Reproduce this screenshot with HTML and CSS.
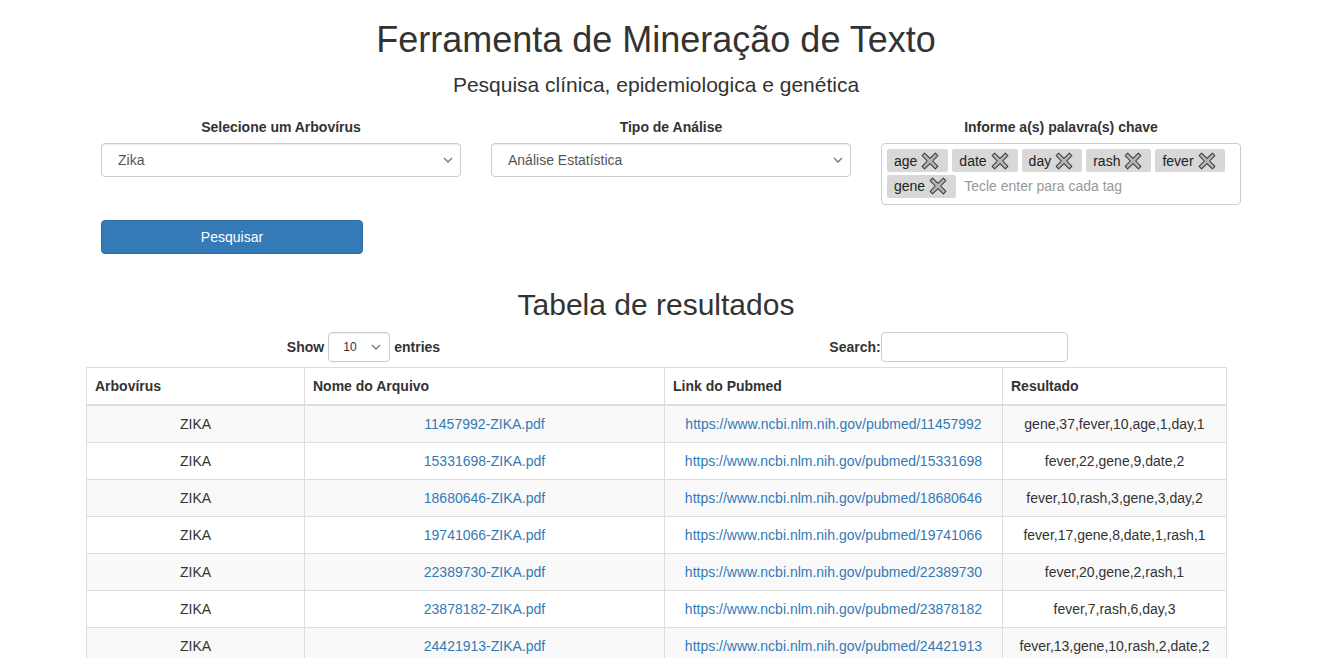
FILE: index.html
```html
<!DOCTYPE html>
<html lang="pt">
<head>
<meta charset="utf-8">
<title>Ferramenta de Mineração de Texto</title>
<link rel="stylesheet" href="styles.css">
</head>
<body>
<div class="page">
  <header class="head">
    <h1 class="title">Ferramenta de Mineração de Texto</h1>
    <p class="subtitle">Pesquisa clínica, epidemiologica e genética</p>
  </header>

  <div class="form-row">
    <div class="field">
      <label class="field-label">Selecione um Arbovírus</label>
      <div class="select">
        <span>Zika</span>
        <svg class="chev" width="10" height="6" viewBox="0 0 10 6"><path d="M1 1 L5 5 L9 1" fill="none" stroke="#777" stroke-width="1.3"/></svg>
      </div>
    </div>
    <div class="field">
      <label class="field-label">Tipo de Análise</label>
      <div class="select">
        <span>Análise Estatística</span>
        <svg class="chev" width="10" height="6" viewBox="0 0 10 6"><path d="M1 1 L5 5 L9 1" fill="none" stroke="#777" stroke-width="1.3"/></svg>
      </div>
    </div>
    <div class="field">
      <label class="field-label">Informe a(s) palavra(s) chave</label>
      <div class="tags">
        <span class="tag">age<svg class="x" width="18" height="18" viewBox="0 0 16 16"><polygon points="3.2,1 8,5.6 12.8,1 15,3.2 10.4,8 15,12.8 12.8,15 8,10.4 3.2,15 1,12.8 5.6,8 1,3.2"/></svg></span>
        <span class="tag">date<svg class="x" width="18" height="18" viewBox="0 0 16 16"><polygon points="3.2,1 8,5.6 12.8,1 15,3.2 10.4,8 15,12.8 12.8,15 8,10.4 3.2,15 1,12.8 5.6,8 1,3.2"/></svg></span>
        <span class="tag">day<svg class="x" width="18" height="18" viewBox="0 0 16 16"><polygon points="3.2,1 8,5.6 12.8,1 15,3.2 10.4,8 15,12.8 12.8,15 8,10.4 3.2,15 1,12.8 5.6,8 1,3.2"/></svg></span>
        <span class="tag">rash<svg class="x" width="18" height="18" viewBox="0 0 16 16"><polygon points="3.2,1 8,5.6 12.8,1 15,3.2 10.4,8 15,12.8 12.8,15 8,10.4 3.2,15 1,12.8 5.6,8 1,3.2"/></svg></span>
        <span class="tag">fever<svg class="x" width="18" height="18" viewBox="0 0 16 16"><polygon points="3.2,1 8,5.6 12.8,1 15,3.2 10.4,8 15,12.8 12.8,15 8,10.4 3.2,15 1,12.8 5.6,8 1,3.2"/></svg></span>
        <span class="tag">gene<svg class="x" width="18" height="18" viewBox="0 0 16 16"><polygon points="3.2,1 8,5.6 12.8,1 15,3.2 10.4,8 15,12.8 12.8,15 8,10.4 3.2,15 1,12.8 5.6,8 1,3.2"/></svg></span>
        <span class="placeholder">Tecle enter para cada tag</span>
      </div>
    </div>
  </div>

  <div class="btn-row">
    <button class="btn">Pesquisar</button>
  </div>

  <h2 class="section-title">Tabela de resultados</h2>

  <div class="dt-controls">
    <div class="dt-length">
      <span class="bold">Show</span>
      <div class="select small">
        <span>10</span>
        <svg class="chev" width="10" height="6" viewBox="0 0 10 6"><path d="M1 1 L5 5 L9 1" fill="none" stroke="#777" stroke-width="1.3"/></svg>
      </div>
      <span class="bold">entries</span>
    </div>
    <div class="dt-search">
      <span class="bold">Search:</span>
      <div class="search-input"></div>
    </div>
  </div>

  <table class="results">
    <colgroup>
      <col class="c1"><col class="c2"><col class="c3"><col class="c4">
    </colgroup>
    <thead>
      <tr><th>Arbovírus</th><th>Nome do Arquivo</th><th>Link do Pubmed</th><th>Resultado</th></tr>
    </thead>
    <tbody>
      <tr><td>ZIKA</td><td><a href="#">11457992-ZIKA.pdf</a></td><td><a href="#">https://www.ncbi.nlm.nih.gov/pubmed/11457992</a></td><td>gene,37,fever,10,age,1,day,1</td></tr>
      <tr><td>ZIKA</td><td><a href="#">15331698-ZIKA.pdf</a></td><td><a href="#">https://www.ncbi.nlm.nih.gov/pubmed/15331698</a></td><td>fever,22,gene,9,date,2</td></tr>
      <tr><td>ZIKA</td><td><a href="#">18680646-ZIKA.pdf</a></td><td><a href="#">https://www.ncbi.nlm.nih.gov/pubmed/18680646</a></td><td>fever,10,rash,3,gene,3,day,2</td></tr>
      <tr><td>ZIKA</td><td><a href="#">19741066-ZIKA.pdf</a></td><td><a href="#">https://www.ncbi.nlm.nih.gov/pubmed/19741066</a></td><td>fever,17,gene,8,date,1,rash,1</td></tr>
      <tr><td>ZIKA</td><td><a href="#">22389730-ZIKA.pdf</a></td><td><a href="#">https://www.ncbi.nlm.nih.gov/pubmed/22389730</a></td><td>fever,20,gene,2,rash,1</td></tr>
      <tr><td>ZIKA</td><td><a href="#">23878182-ZIKA.pdf</a></td><td><a href="#">https://www.ncbi.nlm.nih.gov/pubmed/23878182</a></td><td>fever,7,rash,6,day,3</td></tr>
      <tr><td>ZIKA</td><td><a href="#">24421913-ZIKA.pdf</a></td><td><a href="#">https://www.ncbi.nlm.nih.gov/pubmed/24421913</a></td><td>fever,13,gene,10,rash,2,date,2</td></tr>
    </tbody>
  </table>
</div>
</body>
</html>
```
FILE: styles.css
```css
* { box-sizing: border-box; }
html, body { margin: 0; padding: 0; background: #fff; }
body {
  font-family: "Liberation Sans", Arial, sans-serif;
  font-size: 14px;
  line-height: 20px;
  color: #333;
}
.page {
  width: 1140px;
  margin-left: 86px;
}
.head {
  text-align: center;
  padding-top: 20px;
}
.title {
  margin: 0;
  font-size: 36px;
  line-height: 40px;
  font-weight: normal;
}
.subtitle {
  margin: 13px 0 0;
  font-size: 21px;
  line-height: 24px;
}
.form-row {
  display: grid;
  grid-template-columns: repeat(3, 360px);
  column-gap: 30px;
  padding-left: 15px;
  margin-top: 20px;
  align-items: start;
}
.field { display: flex; flex-direction: column; }
.field-label {
  font-weight: bold;
  text-align: center;
  line-height: 21px;
  margin-bottom: 5px;
}
.select {
  height: 34px;
  border: 1px solid #ccc;
  border-radius: 4px;
  background: #fff;
  color: #555;
  display: flex;
  align-items: center;
  justify-content: space-between;
  padding: 0 7px 0 16px;
  box-shadow: inset 0 1px 1px rgba(0,0,0,.075);
}
.select.small {
  width: 62px;
  height: 30px;
  padding: 0 8px 0 14px;
  font-size: 12px;
  color: #333;
}
.chev { display: block; }
.tags {
  border: 1px solid #ccc;
  border-radius: 4px;
  padding: 5px 4px 6px 5px;
  display: flex;
  flex-wrap: wrap;
  gap: 2px 4px;
  align-items: center;
  min-height: 62px;
}
.tag {
  display: inline-flex;
  align-items: center;
  height: 23px;
  background: #d8d8d8;
  border-radius: 2px;
  padding: 0 9px 0 7px;
  color: #222;
  gap: 4px;
}
.x { display: block; }
.x polygon {
  fill: #b4b4b4;
  stroke: #3a3a3a;
  stroke-width: 0.9;
  stroke-linejoin: round;
}
.placeholder {
  color: #999;
  margin-left: 4px;
}
.btn-row {
  padding-left: 15px;
  margin-top: 15px;
}
.btn {
  width: 262px;
  height: 34px;
  background: #337ab7;
  border: 1px solid #2e6da4;
  border-radius: 4px;
  color: #fff;
  font-family: "Liberation Sans", Arial, sans-serif;
  font-size: 14px;
  padding: 0;
}
.section-title {
  margin: 34px 0 0;
  text-align: center;
  font-size: 30px;
  line-height: 33px;
  font-weight: normal;
}
.dt-controls {
  display: grid;
  grid-template-columns: 1fr 1fr;
  margin-top: 11px;
  height: 30px;
}
.dt-length, .dt-search {
  display: flex;
  align-items: center;
  justify-content: center;
  gap: 4px;
}
.dt-length { padding-right: 15px; }
.dt-search { padding-left: 15px; gap: 0; }
.bold { font-weight: bold; }
.search-input {
  width: 187px;
  height: 30px;
  border: 1px solid #ccc;
  border-radius: 4px;
}
.results {
  margin-top: 5px;
  width: 1140px;
  table-layout: fixed;
  border-collapse: collapse;
  border: 1px solid #ddd;
}
.c1 { width: 218px; }
.c2 { width: 360px; }
.c3 { width: 338px; }
.c4 { width: 224px; }
.results th, .results td {
  border: 1px solid #ddd;
  padding: 8px;
  line-height: 20px;
}
.results th {
  text-align: left;
  font-weight: bold;
  border-bottom: 2px solid #ddd;
}
.results td { text-align: center; }
.results tbody tr:nth-child(odd) { background: #f9f9f9; }
.results a { color: #337ab7; text-decoration: none; }
```
